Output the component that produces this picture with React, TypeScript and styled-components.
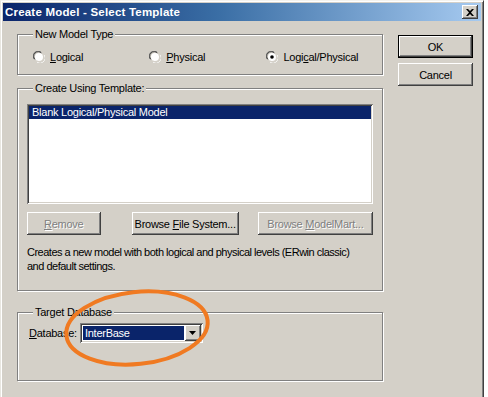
import React from "react";
import styled, { createGlobalStyle } from "styled-components";

const Global = createGlobalStyle`
  html, body { margin: 0; padding: 0; background: #ffffff; }
  body { font-family: Tahoma, "Liberation Sans", Arial, sans-serif; font-size: 11px; color: #000; letter-spacing: -0.25px; }
`;

const Stage = styled.div`
  position: relative;
  width: 488px;
  height: 397px;
  overflow: hidden;
`;

const Window = styled.div`
  width: 484px;
  height: 400px;
  background: #d4d0c8;
  border-top: 1px solid #f4f3ef;
  border-left: 1px solid #e8e6e0;
  border-right: 1px solid #404040;
  box-shadow: inset 1px 1px 0 #ffffff, inset -1px 0 0 #808080;
  padding: 2px 2px 0 2px;
  box-sizing: border-box;
  display: flex;
  flex-direction: column;
`;

const TitleBar = styled.div`
  height: 18px;
  background: linear-gradient(to right, #0a246a 0%, #3a6ea5 45%, #a6caf0 100%);
  display: flex;
  align-items: center;
  justify-content: space-between;
  padding: 0 3px 0 2px;
`;

const Title = styled.span`
  color: #fff;
  font-weight: bold;
  font-size: 11.5px;
  font-family: Tahoma, "Liberation Sans", sans-serif;
  letter-spacing: 0.2px;
`;

const CloseBtn = styled.div`
  width: 16px;
  height: 14px;
  background: #d4d0c8;
  box-shadow: inset -1px -1px #404040, inset 1px 1px #fff, inset -2px -2px #808080;
  display: flex;
  align-items: center;
  justify-content: center;
`;

const Body = styled.div`
  display: flex;
  padding: 7px 0 0 14px;
  gap: 15px;
`;

const MainCol = styled.div`
  width: 366px;
  display: flex;
  flex-direction: column;
`;

const SideCol = styled.div`
  display: flex;
  flex-direction: column;
  gap: 5px;
  padding-top: 7px;
`;

const Group = styled.fieldset<{ $h: number; $mt?: number }>`
  margin: ${(p) => p.$mt ?? 0}px 0 0 0;
  padding: 0 9px 0 9px;
  height: ${(p) => p.$h}px;
  box-sizing: border-box;
  border: 1px solid #808080;
  box-shadow: 1px 1px 0 #fff, inset 1px 1px 0 #fff;
  min-width: 0;
`;

const Legend = styled.legend`
  padding: 0 2px;
  margin-left: 6px;
  background: #d4d0c8;
  line-height: 13px;
`;

const RadioRow = styled.div`
  display: flex;
  align-items: center;
  padding: 10px 0 0 6px;
`;

const RadioItem = styled.label<{ $w: number }>`
  display: flex;
  align-items: center;
  gap: 5px;
  width: ${(p) => p.$w}px;
`;

const U = styled.span`
  text-decoration: underline;
`;

const ListBox = styled.div`
  height: 100px;
  margin: 9px 0 0 0;
  background: #fff;
  box-shadow: inset 1px 1px #808080, inset -1px -1px #fff, inset 2px 2px #404040, inset -2px -2px #d4d0c8;
  padding: 2px;
  box-sizing: border-box;
`;

const ListItem = styled.div<{ $sel?: boolean }>`
  height: 13px;
  line-height: 13px;
  padding-left: 3px;
  background: ${(p) => (p.$sel ? "#0a246a" : "transparent")};
  color: ${(p) => (p.$sel ? "#fff" : "#000")};
`;

const ButtonRow = styled.div`
  display: flex;
  margin-top: 8px;
`;

const Button = styled.div<{ $w: number; $def?: boolean; $dis?: boolean; $ml?: number }>`
  width: ${(p) => p.$w}px;
  height: 23px;
  margin-left: ${(p) => p.$ml ?? 0}px;
  box-sizing: border-box;
  background: #d4d0c8;
  display: flex;
  align-items: center;
  justify-content: center;
  color: ${(p) => (p.$dis ? "#808080" : "#000")};
  text-shadow: ${(p) => (p.$dis ? "1px 1px 0 #fff" : "none")};
  box-shadow: ${(p) =>
    p.$def
      ? "inset 0 0 0 1px #000, inset -2px -2px #404040, inset 2px 2px #fff, inset -3px -3px #808080"
      : "inset -1px -1px #404040, inset 1px 1px #fff, inset -2px -2px #808080"};
`;

const Desc = styled.div`
  margin-top: 10px;
  line-height: 14px;
  white-space: nowrap;
  letter-spacing: -0.5px;
`;

const DbRow = styled.div`
  display: flex;
  align-items: center;
  padding: 4px 0 0 2px;
  gap: 3px;
`;

const Combo = styled.div`
  width: 123px;
  height: 20px;
  box-sizing: border-box;
  background: #fff;
  box-shadow: inset 1px 1px #808080, inset -1px -1px #fff, inset 2px 2px #404040, inset -2px -2px #d4d0c8;
  padding: 2px;
  display: flex;
`;

const ComboValue = styled.div`
  flex: 1;
  margin: 1px;
  background: #0a246a;
  color: #fff;
  line-height: 14px;
  padding-left: 2px;
`;

const ComboArrow = styled.div`
  width: 16px;
  background: #d4d0c8;
  box-shadow: inset -1px -1px #404040, inset 1px 1px #fff, inset -2px -2px #808080;
  display: flex;
  align-items: center;
  justify-content: center;
`;

const Overlay = styled.svg`
  position: absolute;
  left: 0;
  top: 0;
  pointer-events: none;
`;

const Radio = ({ checked }: { checked?: boolean }) => (
  <svg width="12" height="12" viewBox="0 0 12 12">
    <path d="M1 8 A5 5 0 0 1 8 1" fill="none" stroke="#808080" strokeWidth="1" />
    <path d="M2 8.5 A4 4 0 0 1 8.5 2" fill="none" stroke="#404040" strokeWidth="1" />
    <circle cx="6" cy="6" r="4" fill="#fff" />
    <path d="M11 4 A5 5 0 0 1 4 11" fill="none" stroke="#fff" strokeWidth="1" />
    <path d="M10 4 A4 4 0 0 1 4 10" fill="none" stroke="#d4d0c8" strokeWidth="1" />
    {checked && <circle cx="6" cy="6" r="1.8" fill="#000" />}
  </svg>
);

export default function App() {
  return (
    <Stage>
      <Global />
      <Window>
        <TitleBar>
          <Title>Create Model - Select Template</Title>
          <CloseBtn>
            <svg width="8" height="7" viewBox="0 0 8 7">
              <path d="M0 0 L2 0 L4 2 L6 0 L8 0 L5 3.5 L8 7 L6 7 L4 5 L2 7 L0 7 L3 3.5 Z" fill="#000" />
            </svg>
          </CloseBtn>
        </TitleBar>
        <Body>
          <MainCol>
            <Group $h={47}>
              <Legend>New Model Type</Legend>
              <RadioRow>
                <RadioItem $w={120}>
                  <Radio />
                  <span>
                    <U>L</U>ogical
                  </span>
                </RadioItem>
                <RadioItem $w={121}>
                  <Radio />
                  <span>
                    <U>P</U>hysical
                  </span>
                </RadioItem>
                <RadioItem $w={110}>
                  <Radio checked />
                  <span>
                    Logi<U>c</U>al/Physical
                  </span>
                </RadioItem>
              </RadioRow>
            </Group>
            <Group $h={209} $mt={7}>
              <Legend>Create Using Template:</Legend>
              <ListBox>
                <ListItem $sel>Blank Logical/Physical Model</ListItem>
              </ListBox>
              <ButtonRow>
                <Button $w={74} $dis>
                  <span>
                    <U>R</U>emove
                  </span>
                </Button>
                <Button $w={108} $ml={31}>
                  <span>
                    Browse <U>F</U>ile System...
                  </span>
                </Button>
                <Button $w={116} $ml={19} $dis>
                  <span>
                    Browse <U>M</U>odelMart...
                  </span>
                </Button>
              </ButtonRow>
              <Desc>
                Creates a new model with both logical and physical levels (ERwin classic)
                <br />
                and default settings.
              </Desc>
            </Group>
            <Group $h={75} $mt={15}>
              <Legend>Target Database</Legend>
              <DbRow>
                <span>
                  <U>D</U>atabase:
                </span>
                <Combo>
                  <ComboValue>InterBase</ComboValue>
                  <ComboArrow>
                    <svg width="7" height="4" viewBox="0 0 7 4">
                      <path d="M0 0 L7 0 L3.5 4 Z" fill="#000" />
                    </svg>
                  </ComboArrow>
                </Combo>
              </DbRow>
            </Group>
          </MainCol>
          <SideCol>
            <Button $w={75} $def>
              OK
            </Button>
            <Button $w={75}>Cancel</Button>
          </SideCol>
        </Body>
      </Window>
      <Overlay width="488" height="397" viewBox="0 0 488 397">
        <ellipse
          cx="137"
          cy="328"
          rx="71"
          ry="36"
          transform="rotate(-6 137 328)"
          fill="none"
          stroke="#f07a22"
          strokeWidth="4"
        />
      </Overlay>
    </Stage>
  );
}
